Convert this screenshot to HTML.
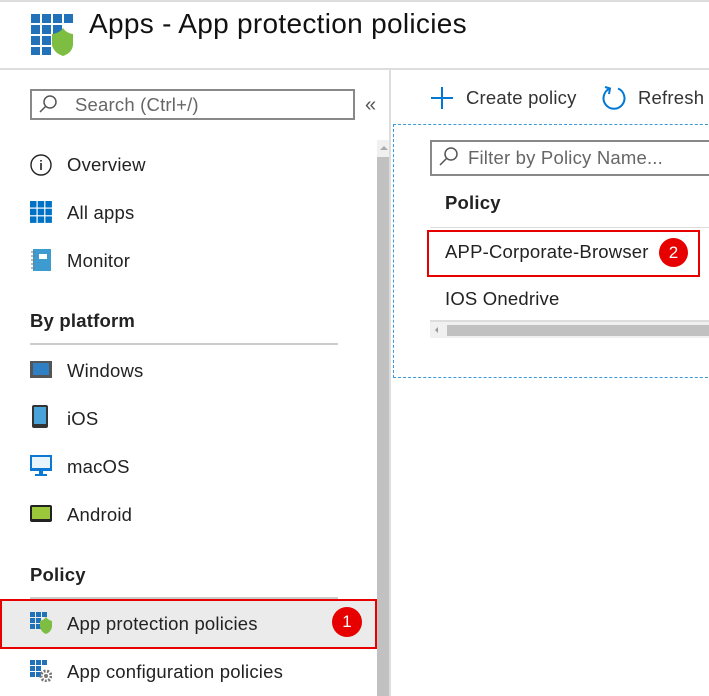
<!DOCTYPE html>
<html><head><style>
*{margin:0;padding:0;box-sizing:border-box}
body{width:709px;height:696px;overflow:hidden;background:#fff;font-family:"Liberation Sans",sans-serif;color:#222;position:relative}
.a{position:absolute}
.t{font-size:18.5px;white-space:nowrap;line-height:22px;letter-spacing:0.2px}
.b{font-weight:bold}
</style></head><body>
<div class="a" style="left:0;top:0;width:709px;height:2px;background:#ddd"></div>
<div class="a" style="left:0;top:68px;width:709px;height:2px;background:#ddd"></div>
<svg class="a" style="left:30px;top:13px" width="45" height="44" viewBox="0 0 45 44">
<g fill="#2272b9">
<rect x="1" y="1" width="9" height="9"/><rect x="12" y="1" width="9" height="9"/><rect x="23" y="1" width="9" height="9"/><rect x="34" y="1" width="9" height="9"/>
<rect x="1" y="12" width="9" height="9"/><rect x="12" y="12" width="9" height="9"/><rect x="23" y="12" width="9" height="9"/>
<rect x="1" y="23" width="9" height="9"/><rect x="12" y="23" width="9" height="9"/>
<rect x="1" y="34" width="9" height="8"/><rect x="12" y="34" width="9" height="8"/>
</g>
<path d="M22 21 Q30 20 33 15 Q36 20 43 21 L43 32 Q42 40 33 43 Q24 40 22 32Z" fill="#7cbd42"/>
</svg>
<div class="a" style="left:89px;top:8px;font-size:28px;color:#111;white-space:nowrap;letter-spacing:0.3px">Apps - App protection policies</div>
<div class="a" style="left:389px;top:70px;width:2px;height:626px;background:#ddd"></div>
<div class="a" style="left:377px;top:140px;width:12px;height:556px;background:#f0f0f0"></div>
<div class="a" style="left:377px;top:157px;width:12px;height:539px;background:#c1c1c1"></div>
<div class="a" style="left:380px;top:146px;width:0;height:0;border-left:4px solid transparent;border-right:4px solid transparent;border-bottom:4px solid #aaa"></div>
<div class="a" style="left:30px;top:89px;width:325px;height:31px;border:2px solid #888"></div>
<svg class="a" style="left:38px;top:94px" width="20" height="20"><circle cx="12" cy="8" r="6" fill="none" stroke="#555" stroke-width="1.5"/><path d="M8 12 L2 18" stroke="#555" stroke-width="1.5"/></svg>
<div class="a t" style="left:75px;top:94px;color:#666">Search (Ctrl+/)</div>
<div class="a" style="left:365px;top:94px;font-size:20px;color:#555">«</div>
<svg class="a" style="left:30px;top:154px" width="22" height="22"><circle cx="11" cy="11" r="10" fill="none" stroke="#222" stroke-width="1.4"/><rect x="10.2" y="9" width="1.6" height="7" fill="#222"/><rect x="10.2" y="6" width="1.6" height="1.6" fill="#222"/></svg>
<div class="a t" style="left:67px;top:154px">Overview</div>
<svg class="a" style="left:30px;top:201px" width="22" height="22"><g fill="#0072c6"><rect x="0" y="0" width="6.5" height="6.5"/><rect x="7.7" y="0" width="6.5" height="6.5"/><rect x="15.4" y="0" width="6.5" height="6.5"/><rect x="0" y="7.7" width="6.5" height="6.5"/><rect x="7.7" y="7.7" width="6.5" height="6.5"/><rect x="15.4" y="7.7" width="6.5" height="6.5"/><rect x="0" y="15.4" width="6.5" height="6.5"/><rect x="7.7" y="15.4" width="6.5" height="6.5"/><rect x="15.4" y="15.4" width="6.5" height="6.5"/></g></svg>
<div class="a t" style="left:67px;top:202px">All apps</div>
<svg class="a" style="left:30px;top:249px" width="22" height="22"><rect x="3" y="0" width="18" height="22" fill="#3d9bd0"/><rect x="9" y="5" width="8" height="5" fill="#fff"/><g stroke="#777"><path d="M1 3h4M1 7h4M1 11h4M1 15h4M1 19h4"/></g></svg>
<div class="a t" style="left:67px;top:250px">Monitor</div>
<div class="a t b" style="left:30px;top:310px">By platform</div>
<div class="a" style="left:30px;top:343px;width:308px;height:2px;background:#ccc"></div>
<svg class="a" style="left:30px;top:361px" width="22" height="18"><rect x="0" y="0" width="22" height="17" fill="#555"/><rect x="3" y="2" width="16" height="12" fill="#2e7fc4"/></svg>
<div class="a t" style="left:67px;top:360px">Windows</div>
<svg class="a" style="left:32px;top:405px" width="18" height="24"><rect x="0" y="0" width="16" height="23" rx="2" fill="#333"/><rect x="2" y="2" width="12" height="17" fill="#4aa3d8"/></svg>
<div class="a t" style="left:67px;top:408px">iOS</div>
<svg class="a" style="left:30px;top:455px" width="22" height="22"><rect x="0" y="0" width="22" height="16" fill="#0d78d4"/><rect x="2" y="2" width="18" height="11" fill="#e8f4fc"/><rect x="9" y="16" width="4" height="4" fill="#0d78d4"/><rect x="5" y="19" width="12" height="2" fill="#0d78d4"/></svg>
<div class="a t" style="left:67px;top:456px">macOS</div>
<svg class="a" style="left:30px;top:505px" width="22" height="18"><rect x="0" y="0" width="22" height="17" rx="2" fill="#222"/><rect x="2" y="2" width="18" height="12" fill="#9bc83a"/></svg>
<div class="a t" style="left:67px;top:504px">Android</div>
<div class="a t b" style="left:30px;top:564px">Policy</div>
<div class="a" style="left:30px;top:597px;width:308px;height:2px;background:#ccc"></div>
<div class="a" style="left:0;top:599px;width:377px;height:50px;background:#ebebeb;border:2px solid #e60000"></div>
<svg class="a" style="left:30px;top:612px" width="22" height="22"><g fill="#2272b9"><rect x="0" y="0" width="5" height="5"/><rect x="6" y="0" width="5" height="5"/><rect x="12" y="0" width="5" height="5"/><rect x="0" y="6" width="5" height="5"/><rect x="6" y="6" width="5" height="5"/><rect x="0" y="12" width="5" height="5"/><rect x="6" y="12" width="5" height="5"/></g><path d="M10 9 Q14 8 16 5 Q18 8 22 9 L22 15 Q21 20 16 22 Q11 20 10 15Z" fill="#7cbd42"/></svg>
<div class="a t" style="left:67px;top:613px">App protection policies</div>
<div class="a" style="left:332px;top:607px;width:30px;height:30px;border-radius:50%;background:#e60000;color:#fff;font-size:17px;text-align:center;line-height:30px">1</div>
<svg class="a" style="left:30px;top:660px" width="22" height="22"><g fill="#2272b9"><rect x="0" y="0" width="5" height="5"/><rect x="6" y="0" width="5" height="5"/><rect x="12" y="0" width="5" height="5"/><rect x="0" y="6" width="5" height="5"/><rect x="6" y="6" width="5" height="5"/><rect x="0" y="12" width="5" height="5"/><rect x="6" y="12" width="5" height="5"/></g><circle cx="16" cy="16" r="5" fill="none" stroke="#777" stroke-width="3" stroke-dasharray="2 1.5"/><circle cx="16" cy="16" r="2" fill="#777"/></svg>
<div class="a t" style="left:67px;top:661px">App configuration policies</div>
<svg class="a" style="left:430px;top:86px" width="24" height="24"><path d="M12 1v22M1 12h22" stroke="#0078d4" stroke-width="2"/></svg>
<div class="a t" style="left:466px;top:87px;color:#333">Create policy</div>
<svg class="a" style="left:601px;top:85px" width="26" height="26"><path d="M9 3.5 A10.5 10.5 0 1 0 17 3.5" fill="none" stroke="#0078d4" stroke-width="2"/><path d="M4 2 L9 3.5 L8 9" fill="none" stroke="#0078d4" stroke-width="2"/></svg>
<div class="a t" style="left:638px;top:87px;color:#333">Refresh</div>
<div class="a" style="left:393px;top:124px;width:330px;height:254px;border:1px dashed #3a9ad9"></div>
<div class="a" style="left:430px;top:140px;width:290px;height:36px;border:2px solid #888;border-right:none"></div>
<svg class="a" style="left:438px;top:146px" width="22" height="22"><circle cx="13" cy="8" r="6" fill="none" stroke="#555" stroke-width="1.5"/><path d="M9 12 L2 19" stroke="#555" stroke-width="1.5"/></svg>
<div class="a t" style="left:468px;top:147px;color:#666">Filter by Policy Name...</div>
<div class="a t b" style="left:445px;top:192px">Policy</div>
<div class="a" style="left:430px;top:227px;width:279px;height:1px;background:#ddd"></div>
<div class="a" style="left:427px;top:230px;width:273px;height:47px;border:2px solid #e60000"></div>
<div class="a t" style="left:445px;top:241px">APP-Corporate-Browser</div>
<div class="a" style="left:659px;top:238px;width:29px;height:29px;border-radius:50%;background:#e60000;color:#fff;font-size:17px;text-align:center;line-height:29px">2</div>
<div class="a t" style="left:445px;top:288px">IOS Onedrive</div>
<div class="a" style="left:430px;top:320px;width:279px;height:2px;background:#ddd"></div>
<div class="a" style="left:430px;top:322px;width:279px;height:16px;background:#f0f0f0"></div>
<div class="a" style="left:447px;top:325px;width:262px;height:11px;background:#c1c1c1"></div>
<div class="a" style="left:435px;top:327px;width:0;height:0;border-top:3px solid transparent;border-bottom:3px solid transparent;border-right:3px solid #999"></div>
</body></html>
